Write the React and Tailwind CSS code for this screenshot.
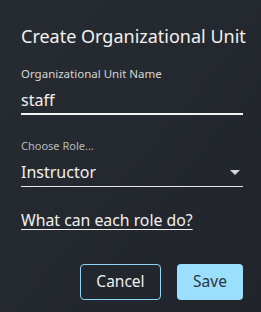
import React from 'react';

const App = () => {
  return (
    <div
      className="w-[261px] h-[312px] bg-gradient-to-br from-[#272c32] to-[#21252b] text-[#f1f1f1] pl-[21px] pr-[18px] pt-[26px] flex flex-col overflow-hidden"
      style={{ fontFamily: '"Noto Sans", "Open Sans", sans-serif' }}
    >
      <h1 className="text-[18px] leading-[20px] whitespace-nowrap">Create Organizational Unit</h1>

      <div className="mt-[21px]">
        <label className="block text-[11.5px] leading-[14px] text-[#d6d6d6]">Organizational Unit Name</label>
        <div className="mt-[9px] text-[16px] leading-[20px]">staff</div>
        <div className="mt-[3px] h-[2px] bg-[#f4f4f4]" />
      </div>

      <div className="mt-[24px]">
        <label className="block text-[11px] leading-[14px] text-[#b8babd]">Choose Role...</label>
        <div className="mt-[9px] flex items-center justify-between text-[16px] leading-[20px]">
          <span>Instructor</span>
          <svg width="10" height="5" viewBox="0 0 10 5" className="mr-[3px]">
            <path d="M0 0 L10 0 L5 5 Z" fill="#d8d8d8" />
          </svg>
        </div>
        <div className="mt-[4px] h-px bg-[#e6e6e6]" />
      </div>

      <a className="mt-[24px] text-[15.8px] leading-[18px] underline underline-offset-[3px] w-fit cursor-pointer">
        What can each role do?
      </a>

      <div className="mt-[35px] flex justify-end gap-[16px]">
        <button className="w-[81px] h-[36px] rounded-[4px] border border-[#8ed6f7] text-[15.5px] text-[#eeeeee]">
          Cancel
        </button>
        <button className="w-[66px] h-[36px] rounded-[4px] bg-[#9bdfff] text-[15.5px] text-[#2f3338]">
          Save
        </button>
      </div>
    </div>
  );
};

export default App;
